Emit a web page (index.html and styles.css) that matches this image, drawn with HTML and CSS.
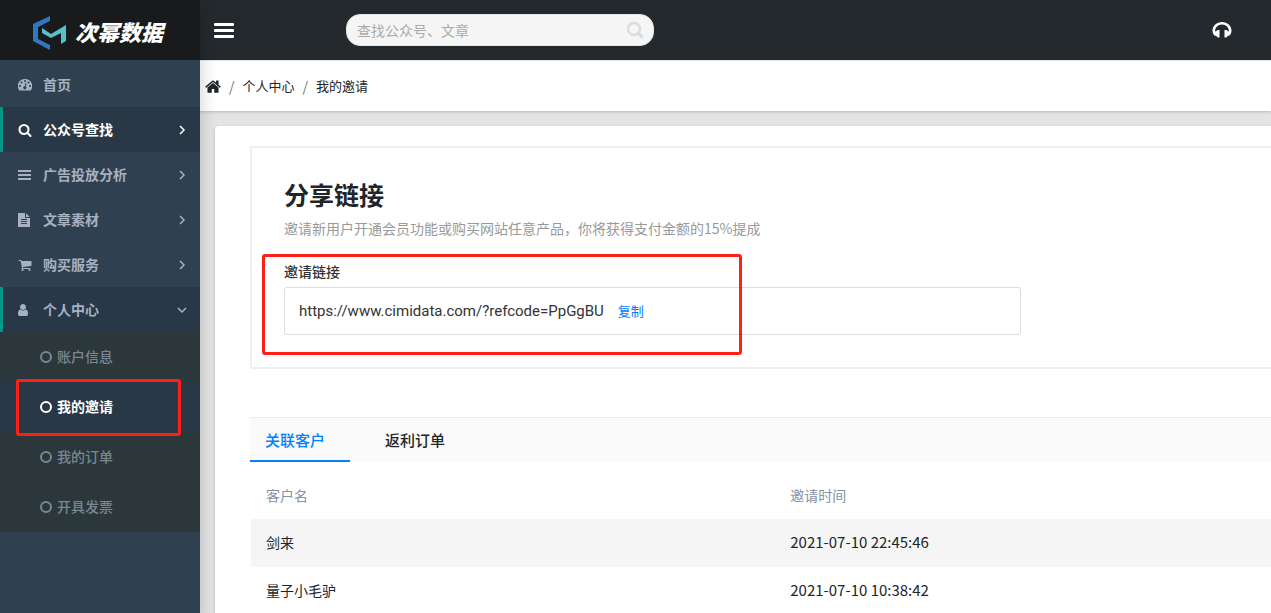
FILE: index.html
```html
<!DOCTYPE html>
<html lang="zh-CN">
<head>
<meta charset="utf-8">
<meta name="viewport" content="width=device-width, initial-scale=1">
<title>我的邀请 - 次幂数据</title>
<link rel="stylesheet" href="styles.css">
</head>
<body>
<div class="app">
  <aside class="sidebar">
    <a class="brand" href="#">
      <svg class="brand-mark" viewBox="0 0 34 34" aria-hidden="true">
        <path fill="#2f78c4" d="M17 0v5L5 11v12l12 6v5L0 25V8z"/>
        <path fill="#56c2c8" d="M9 12l9 6 15-9v16l-5 3V17l-10 5-9-5z"/>
      </svg>
      <span class="brand-name">次幂数据</span>
    </a>
    <nav class="menu">
      <a class="menu-item" href="#">
        <svg class="icon" viewBox="0 0 14 14" aria-hidden="true"><path fill="currentColor" fill-rule="evenodd" d="M7 1a7 7 0 0 1 6 11q-.2.500-.6.500H1.600q-.4 0-.6-.500A7 7 0 0 1 7 1zM7 2a1 1 0 1 0 0 2 1 1 0 0 0 0-2zM3.500 3.500a1 1 0 1 0 0 2 1 1 0 0 0 0-2zM10.500 3.500a1 1 0 1 0 0 2 1 1 0 0 0 0-2zM2 7a1 1 0 1 0 0 2 1 1 0 0 0 0-2zM12 7a1 1 0 1 0 0 2 1 1 0 0 0 0-2zM7.600 5l-.9 3.300A1.500 1.500 0 1 0 7.700 8.600l.9-3.300z"/></svg>
        <span>首页</span>
      </a>
      <a class="menu-item current" href="#">
        <svg class="icon" viewBox="0 0 1792 1792" aria-hidden="true"><path fill="currentColor" d="M1216 832q0-185-131.500-316.500t-316.500-131.500-316.500 131.500-131.500 316.500 131.500 316.500 316.500 131.500 316.500-131.500 131.500-316.500zm512 832q0 52-38 90t-90 38q-54 0-90-38l-343-342q-179 124-399 124-143 0-273.500-55.500t-225-150-150-225-55.500-273.500 55.500-273.500 150-225 225-150 273.500-55.500 273.500 55.500 225 150 150 225 55.500 273.500q0 220-124 399l343 343q37 37 37 90z"/></svg>
        <span>公众号查找</span>
        <svg class="arrow" viewBox="0 0 10 10" aria-hidden="true"><path d="M3 1l4 4-4 4"/></svg>
      </a>
      <a class="menu-item" href="#">
        <svg class="icon" viewBox="0 0 14 14" aria-hidden="true"><path fill="currentColor" d="M0 2h13v2H0zM0 6h13v2H0zM0 10h13v2H0z"/></svg>
        <span>广告投放分析</span>
        <svg class="arrow" viewBox="0 0 10 10" aria-hidden="true"><path d="M3 1l4 4-4 4"/></svg>
      </a>
      <a class="menu-item" href="#">
        <svg class="icon" viewBox="128 0 1792 1792" aria-hidden="true"><path fill="currentColor" d="M1596 476q14 14 28 36h-472v-472q22 14 36 28zm-476 164h544v1056q0 40-28 68t-68 28h-1344q-40 0-68-28t-28-68v-1600q0-40 28-68t68-28h800v544q0 40 28 68t68 28zm160 736v-64q0-14-9-23t-23-9h-704q-14 0-23 9t-9 23v64q0 14 9 23t23 9h704q14 0 23-9t9-23zm0-256v-64q0-14-9-23t-23-9h-704q-14 0-23 9t-9 23v64q0 14 9 23t23 9h704q14 0 23-9t9-23zm0-256v-64q0-14-9-23t-23-9h-704q-14 0-23 9t-9 23v64q0 14 9 23t23 9h704q14 0 23-9t9-23z"/></svg>
        <span>文章素材</span>
        <svg class="arrow" viewBox="0 0 10 10" aria-hidden="true"><path d="M3 1l4 4-4 4"/></svg>
      </a>
      <a class="menu-item" href="#">
        <svg class="icon" viewBox="0 0 1792 1792" aria-hidden="true"><path fill="currentColor" d="M704 1536q0 52-38 90t-90 38-90-38-38-90 38-90 90-38 90 38 38 90zm896 0q0 52-38 90t-90 38-90-38-38-90 38-90 90-38 90 38 38 90zm128-1088v512q0 24-16.500 42.500t-40.500 21.500l-1044 122q13 60 13 70 0 16-24 64h920q26 0 45 19t19 45-19 45-45 19h-1024q-26 0-45-19t-19-45q0-11 8-31.500t16-36 21.500-40 15.500-29.500l-177-823h-204q-26 0-45-19t-19-45 19-45 45-19h256q16 0 28.500 6.500t19.500 15.500 13 24.500 8 26 5.500 29.500 4.500 26h1201q26 0 45 19t19 45z"/></svg>
        <span>购买服务</span>
        <svg class="arrow" viewBox="0 0 10 10" aria-hidden="true"><path d="M3 1l4 4-4 4"/></svg>
      </a>
      <a class="menu-item open" href="#">
        <svg class="icon" viewBox="256 0 1792 1792" aria-hidden="true"><path fill="currentColor" d="M1536 1399q0 109-62.500 187t-150.500 78h-854q-88 0-150.500-78t-62.500-187q0-85 8.500-160.500t31.500-152 58.500-131 94-89 134.500-34.500q131 128 313 128t313-128q76 0 134.500 34.500t94 89 58.500 131 31.500 152 8.500 160.500zm-256-887q0 159-112.500 271.500t-271.500 112.500-271.500-112.500-112.500-271.500 112.500-271.500 271.500-112.500 271.500 112.500 112.500 271.500z"/></svg>
        <span>个人中心</span>
        <svg class="arrow" viewBox="0 0 10 10" aria-hidden="true"><path d="M1 3l4 4 4-4"/></svg>
      </a>
      <div class="submenu">
        <a class="submenu-item" href="#"><i class="ring"></i><span>账户信息</span></a>
        <a class="submenu-item selected" href="#"><i class="ring"></i><span>我的邀请</span><i class="highlight highlight-menu"></i></a>
        <a class="submenu-item" href="#"><i class="ring"></i><span>我的订单</span></a>
        <a class="submenu-item" href="#"><i class="ring"></i><span>开具发票</span></a>
      </div>
    </nav>
  </aside>

  <div class="page">
    <header class="topbar">
      <button class="toggle" type="button" aria-label="菜单">
        <svg viewBox="0 0 20 16" width="20" height="16" aria-hidden="true"><path fill="#fff" d="M1 0h18q1 0 1 1v1q0 1-1 1H1Q0 3 0 2V1q0-1 1-1zM1 6h18q1 0 1 1v1q0 1-1 1H1Q0 9 0 8V7q0-1 1-1zM1 12h18q1 0 1 1v1q0 1-1 1H1q-1 0-1-1v-1q0-1 1-1z"/></svg>
      </button>
      <form class="search">
        <input type="text" placeholder="查找公众号、文章" aria-label="查找公众号、文章">
        <button type="button" aria-label="搜索">
          <svg viewBox="0 0 18 18" width="18" height="18" fill="none" stroke="#ddd" aria-hidden="true"><circle cx="8" cy="8" r="6" stroke-width="2.500"/><path d="M12.500 12.500l3 3" stroke-width="3.500" stroke-linecap="round"/></svg>
        </button>
      </form>
      <button class="support" type="button" aria-label="客服">
        <svg viewBox="0 0 20 16" width="20" height="16" aria-hidden="true"><path fill="#fff" d="M10 0c5.300 0 9.500 3.700 9.500 8.500 0 2-.7 3.600-2 5l-2 .5c-.3 1-1.200 1.500-3 1.500V8c2 0 3 .4 3.400 1.200l1 .3C17 5.500 14 2.600 10 2.600S3 5.500 3.100 9.500l1-.3C4.500 8.400 5.500 8 7.500 8v7.500c-1.800 0-2.700-.5-3-1.500l-2-.5c-1.300-1.400-2-3-2-5C.5 3.700 4.700 0 10 0z"/></svg>
      </button>
    </header>

    <nav class="crumbs" aria-label="breadcrumb">
      <a href="#" aria-label="首页"><svg viewBox="64 230 1664 1306" width="16" height="13" aria-hidden="true"><path fill="currentColor" d="M1472 992v480q0 26-19 45t-45 19h-384v-384h-256v384h-384q-26 0-45-19t-19-45v-480q0-1 .5-3t.5-3l575-474 575 474q1 2 1 6zm223-69l-62 74q-8 9-21 11h-3q-13 0-21-7l-692-577-692 577q-12 8-24 7-13-2-21-11l-62-74q-8-10-7-23.500t11-21.500l719-599q32-26 76-26t76 26l244 204v-195q0-14 9-23t23-9h192q14 0 23 9t9 23v408l219 182q10 8 11 21.500t-7 23.500z"/></svg></a>
      <span class="slash">/</span>
      <a href="#">个人中心</a>
      <span class="slash">/</span>
      <a href="#">我的邀请</a>
    </nav>

    <main class="panel">
      <section class="share">
        <h1>分享链接</h1>
        <p class="hint">邀请新用户开通会员功能或购买网站任意产品，你将获得支付金额的15%提成</p>
        <div class="field">
          <h2>邀请链接</h2>
          <div class="linkbox">
            <span class="url">https://www.cimidata.com/?refcode=PpGgBU</span>
            <button class="copy" type="button">复制</button>
          </div>
          <i class="highlight highlight-field"></i>
        </div>
      </section>

      <div class="tabs" role="tablist">
        <button class="tab active" type="button" role="tab" aria-selected="true">关联客户</button>
        <button class="tab" type="button" role="tab" aria-selected="false">返利订单</button>
      </div>

      <table class="customers">
        <thead><tr><th>客户名</th><th>邀请时间</th></tr></thead>
        <tbody>
          <tr><td>剑来</td><td class="time">2021-07-10 22:45:46</td></tr>
          <tr><td>量子小毛驴</td><td class="time">2021-07-10 10:38:42</td></tr>
        </tbody>
      </table>
    </main>
  </div>
</div>
</body>
</html>
```
FILE: styles.css
```css
* { box-sizing: border-box; }

body {
  margin: 0;
  background: #e4e4e4;
  color: #212529;
  font: 14px/20px "Noto Sans CJK SC", sans-serif;
}

a { color: inherit; text-decoration: none; }

button {
  padding: 0;
  border: 0;
  background: none;
  color: inherit;
  font: inherit;
  cursor: pointer;
}

svg { display: block; }

.app {
  display: flex;
  height: 100vh;
  overflow: hidden;
}

/* Sidebar */
.sidebar {
  position: relative;
  z-index: 1;
  flex: 0 0 200px;
  background: #2f4050;
  box-shadow: 0 8px 17px rgba(0, 0, 0, .2);
}

.brand {
  display: flex;
  align-items: center;
  gap: 8px;
  height: 60px;
  padding: 6px 0 0 33px;
  background: #191a1b;
}

.brand-mark { width: 34px; height: 34px; }

.brand-name {
  padding-bottom: 4px;
  color: #fff;
  font-size: 22px;
  font-style: italic;
  font-weight: 900;
  line-height: 28px;
}

.menu { padding-top: 2px; }

.menu-item {
  display: flex;
  align-items: center;
  height: 45px;
  padding: 0 13px 0 15px;
  border-left: 3px solid transparent;
  color: #a7b1c2;
  font-weight: 600;
}

.menu-item span,
.submenu-item span { padding-bottom: 2px; }

.menu-item .icon {
  width: 14px;
  height: 14px;
  margin-right: 11px;
}

.arrow {
  width: 10px;
  height: 10px;
  margin-left: auto;
  fill: none;
  stroke: currentColor;
  stroke-width: 1.5;
}

.menu-item.current,
.menu-item.open {
  border-color: #009688;
  background: #293846;
}

.menu-item.current { color: #fff; }

.submenu { background: #2c373c; }

.submenu-item {
  position: relative;
  display: flex;
  align-items: center;
  gap: 5px;
  height: 50px;
  padding-left: 40px;
  color: #788793;
  font-weight: 500;
}

.submenu-item.selected {
  background: #293846;
  color: #fff;
  font-weight: 700;
}

.ring {
  width: 12px;
  height: 12px;
  border: 2px solid currentColor;
  border-radius: 50%;
}

.highlight {
  position: absolute;
  border: 3px solid #ff2015;
  border-radius: 3px;
  pointer-events: none;
}

.highlight-menu { inset: -3px 19px -4px 16px; }
.highlight-field { inset: -7px 279px -20px -22px; }

/* Top bar */
.page {
  display: flex;
  flex: 1;
  flex-direction: column;
  min-width: 0;
}

.topbar {
  display: flex;
  flex: none;
  align-items: center;
  height: 60px;
  padding: 0 39px 0 14px;
  background: #24292d;
}

.toggle { padding-top: 2px; }

.search {
  display: flex;
  align-items: center;
  width: 308px;
  height: 32px;
  margin-left: 112px;
  padding: 0 9px 0 10px;
  border: 1px solid #e4e4e4;
  border-radius: 14px;
  background: #f5f5f5;
}

.search input {
  flex: 1;
  min-width: 0;
  padding: 0;
  border: 0;
  outline: 0;
  background: none;
  font: inherit;
}

.search input::placeholder { color: #aaa; }

.support { margin-left: auto; }

.crumbs {
  display: flex;
  flex: none;
  align-items: center;
  gap: 8px;
  height: 51px;
  padding-left: 5px;
  border-top: 1px solid #e2e5e8;
  background: #fff;
  box-shadow: 0 1px 3px rgba(0, 0, 0, .2);
  font-size: 13px;
}

.slash { color: #6c757d; font-size: 14px; }

/* Content */
.panel {
  flex: 1;
  margin: 15px 0 0 15px;
  padding: 20px 0 0 35px;
  border-radius: 4px 0 0 0;
  background: #fff;
  box-shadow: 0 1px 3px rgba(0, 0, 0, .2);
}

.share {
  padding: 28px 32px 32px;
  border: 2px solid #f0f0f0;
  border-right: 0;
}

.share h1 {
  margin: 0;
  font-size: 25px;
  font-weight: 700;
  line-height: 36px;
}

.hint {
  margin: 6px 0 23px;
  color: #999;
}

.field {
  position: relative;
  max-width: 737px;
}

.field h2 {
  margin: 0 0 6px;
  color: #333;
  font-size: 14px;
  font-weight: 500;
  line-height: 20px;
}

.linkbox {
  display: flex;
  align-items: center;
  gap: 14px;
  height: 48px;
  padding: 0 14px;
  border: 1px solid #ddd;
  border-radius: 3px;
}

.url {
  color: #333;
  font-family: Roboto, sans-serif;
  font-size: 15px;
}

.copy { color: #007bff; font-size: 13px; }

.tabs {
  display: flex;
  gap: 20px;
  height: 45px;
  margin-top: 48px;
  border-top: 1px solid #ececec;
  background: #fafafa;
}

.tab {
  width: 100px;
  padding: 2px 0 0 15px;
  border-bottom: 2px solid transparent;
  font-size: 15px;
  font-weight: 500;
  text-align: left;
}

.tab.active { border-color: #0080ff; color: #0080ff; }

.customers {
  width: 100%;
  padding-left: 1px;
  border-spacing: 0;
  table-layout: fixed;
}

.customers th,
.customers td {
  height: 48px;
  padding: 0 15px 2px;
  text-align: left;
}

.customers th {
  height: 57px;
  padding-top: 10px;
  color: #8492a6;
  font-weight: 400;
}

.customers th:first-child { width: 51.4%; }
.customers tbody tr:nth-child(odd) { background: #f5f5f5; }
.customers .time { font-size: 15px; }
```
